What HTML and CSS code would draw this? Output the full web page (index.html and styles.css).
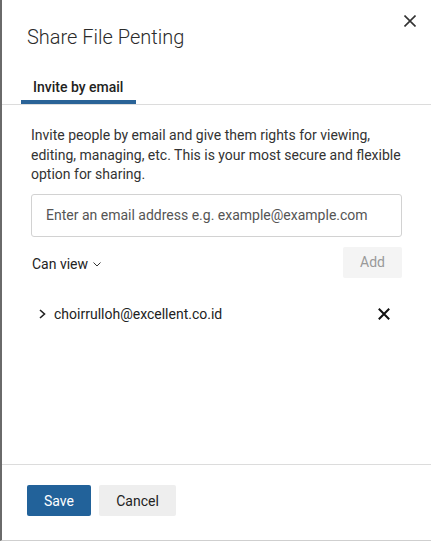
FILE: index.html
```html
<!DOCTYPE html>
<html>
<head>
<meta charset="utf-8">
<link rel="stylesheet" href="styles.css">
</head>
<body>
<div class="dialog">
  <button class="close" aria-label="Close">
    <svg width="12" height="12" viewBox="0 0 12 12"><path d="M0.5 0.5L11.5 11.5M11.5 0.5L0.5 11.5" stroke="#333" stroke-width="1.6" fill="none"/></svg>
  </button>
  <div class="head">
    <h1 class="title">Share File Penting</h1>
    <div class="tabs">
      <div class="tab active">Invite by email</div>
    </div>
  </div>
  <div class="body">
    <p class="desc">Invite people by email and give them rights for viewing, editing, managing, etc. This is your most secure and flexible option for sharing.</p>
    <div class="input">Enter an email address e.g. example@example.com</div>
    <div class="controls">
      <div class="perm">Can view
        <svg class="caret" width="8" height="5" viewBox="0 0 8 5"><path d="M0.5 0.5L4 4L7.5 0.5" stroke="#333" stroke-width="1" fill="none"/></svg>
      </div>
      <button class="btn add">Add</button>
    </div>
    <div class="person">
      <svg class="expand" width="7" height="10" viewBox="0 0 7 10"><path d="M1 1L5.5 5L1 9" stroke="#222" stroke-width="1.6" fill="none"/></svg>
      <span class="email">choirrulloh@excellent.co.id</span>
      <svg class="remove" width="12" height="12" viewBox="0 0 12 12"><path d="M0.8 0.8L11.2 11.2M11.2 0.8L0.8 11.2" stroke="#111" stroke-width="2" fill="none"/></svg>
    </div>
  </div>
  <div class="foot">
    <button class="btn save">Save</button>
    <button class="btn cancel">Cancel</button>
  </div>
</div>
</body>
</html>
```

FILE: styles.css
```css
html, body {
  margin: 0;
  padding: 0;
  background: #fff;
}
body {
  font-family: Roboto, "Liberation Sans", sans-serif;
  color: #222;
}
.dialog {
  position: relative;
  width: 431px;
  height: 541px;
  box-sizing: border-box;
  border-left: 2px solid #6a6a6a;
  border-bottom: 1px solid #cfcfcf;
  display: flex;
  flex-direction: column;
}
.close {
  position: absolute;
  top: 15px;
  right: 15px;
  width: 12px;
  height: 12px;
  padding: 0;
  border: 0;
  background: none;
  display: flex;
}
.head {
  padding-top: 25px;
}
.title {
  margin: 0 0 0 25px;
  font-size: 20px;
  line-height: 24px;
  font-weight: 300;
  color: #2b2b2b;
}
.tabs {
  margin-top: 28px;
  display: flex;
  border-bottom: 1px solid #dcdcdc;
}
.tab {
  margin-left: 19px;
  padding: 0 13px 3px 12px;
  font-size: 14px;
  line-height: 20px;
  font-weight: 500;
  color: #222;
  border-bottom: 4px solid #2a6397;
}
.body {
  flex: 1;
  padding: 21px 29px 0 29px;
}
.desc {
  margin: 0;
  font-size: 14px;
  line-height: 19.6px;
  color: #333;
}
.input {
  margin-top: 9px;
  height: 43px;
  box-sizing: border-box;
  border: 1px solid #d2d2d2;
  border-radius: 3px;
  padding: 0 14px;
  display: flex;
  align-items: center;
  font-size: 14px;
  color: #555;
}
.controls {
  margin-top: 10px;
  display: flex;
  justify-content: space-between;
  align-items: center;
}
.perm {
  display: flex;
  align-items: center;
  gap: 5px;
  padding: 3px 0 0 1px;
  font-size: 14px;
  line-height: 20px;
  color: #222;
}
.caret {
  margin-top: 1px;
}
.btn {
  height: 31px;
  border: 0;
  border-radius: 2px;
  font-family: Roboto, "Liberation Sans", sans-serif;
  font-size: 14px;
  padding: 0;
}
.add {
  width: 59px;
  background: #f4f4f4;
  color: #999;
}
.person {
  margin-top: 26px;
  display: flex;
  align-items: center;
  padding: 0 12px 0 8px;
  font-size: 14px;
  line-height: 20px;
  color: #222;
}
.expand {
  margin-right: 8px;
}
.email {
  flex: 1;
}
.foot {
  height: 76px;
  box-sizing: border-box;
  border-top: 1px solid #dcdcdc;
  padding: 20px 0 0 25px;
  display: flex;
  align-items: flex-start;
  gap: 8px;
}
.save {
  width: 64px;
  background: #22629a;
  color: #fff;
}
.cancel {
  width: 77px;
  background: #eeeeee;
  color: #222;
}
```
